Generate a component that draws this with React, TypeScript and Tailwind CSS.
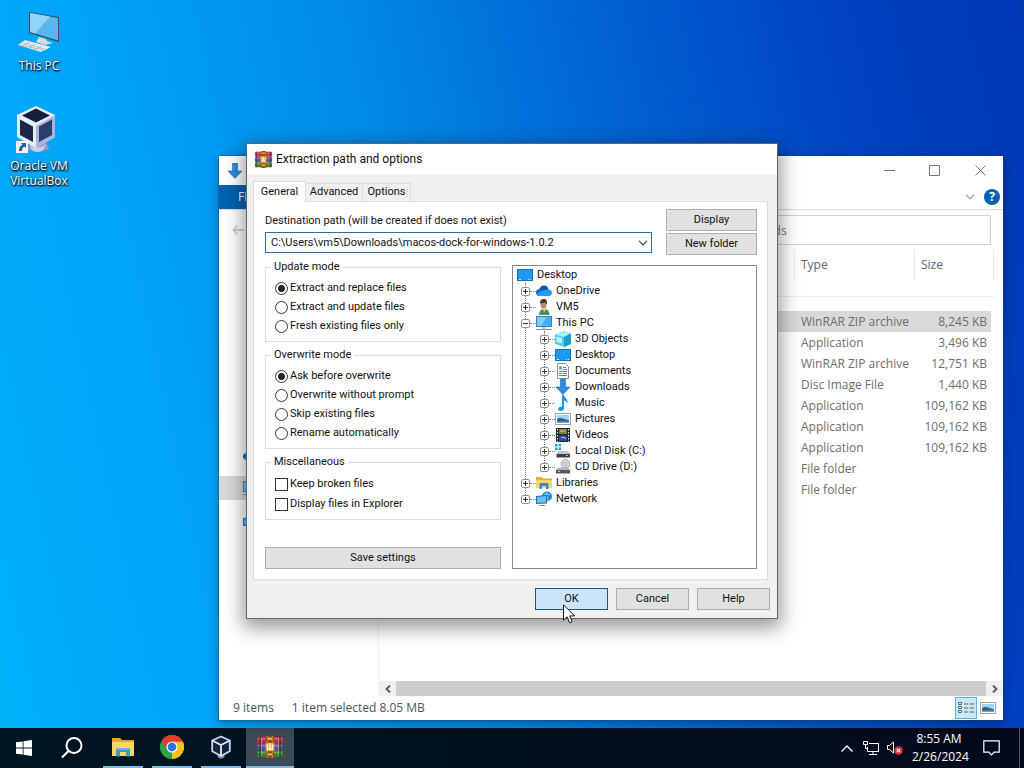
import { useState, type ReactNode } from 'react';

interface FileRow {
    type: string;
    size: string;
}

interface TreeNode {
    label: string;
    icon: ReactNode;
    open?: boolean;
    children?: TreeNode[];
}

const files: FileRow[] = [
    { type: 'WinRAR ZIP archive', size: '8,245 KB' },
    { type: 'Application', size: '3,496 KB' },
    { type: 'WinRAR ZIP archive', size: '12,751 KB' },
    { type: 'Disc Image File', size: '1,440 KB' },
    { type: 'Application', size: '109,162 KB' },
    { type: 'Application', size: '109,162 KB' },
    { type: 'Application', size: '109,162 KB' },
    { type: 'File folder', size: '' },
    { type: 'File folder', size: '' },
];

/* ---------- icons ---------- */

const WinRarIcon = ({ className }: { className: string }) => (
    <svg viewBox="0 0 26 24" preserveAspectRatio="none" className={className} aria-hidden="true">
        <rect x="0" y="1" width="26" height="7" rx="1" fill="#c22f45" />
        <rect x="1" y="2" width="24" height="2" fill="#e0566a" />
        <rect x="0" y="8.500" width="26" height="7" rx="1" fill="#4f4ba6" />
        <rect x="1" y="9.500" width="24" height="2" fill="#7d79cc" />
        <rect x="0" y="16" width="26" height="7" rx="1" fill="#2f7f35" />
        <rect x="1" y="17" width="24" height="2" fill="#5cb14a" />
        <path d="M3 1v22M23 1v22" stroke="#2d1b2c" strokeWidth="1" />
        <path d="M4.500 2v20M21.500 2v20" stroke="#c9a24a" strokeWidth="0.800" />
        <rect x="9" y="0" width="8" height="24" fill="#8d4a23" />
        <path d="M10.500 0v24M15.500 0v24" stroke="#c77a33" strokeWidth="1.200" />
        <rect x="8.500" y="7.500" width="9" height="9" fill="#e5a52f" />
        <path d="M10.500 9v5.500h5V9M13 8v6" fill="none" stroke="#fff3c8" strokeWidth="1.500" />
        <path d="M11 3h4M11 20h4" stroke="#f3c65a" strokeWidth="2" />
    </svg>
);

const VirtualBoxIcon = ({ className }: { className: string }) => (
    <svg viewBox="0 0 40 48" className={className} aria-hidden="true">
        <ellipse cx="22" cy="42" rx="11" ry="5" fill="#8b9bc4" />
        <path d="M14 38c2 6 14 6 17-1l-3 7c-3 4-10 4-13 0z" fill="#c4cce4" />
        <path d="M20 1 39 10v22L20 43 1 32V10z" fill="#e9edf7" />
        <path d="M20 21v22l19-11V10z" fill="#a9b4d6" />
        <path d="M20 3.500 34 10.500 20 17.500 6 10.500z" fill="#141f3d" />
        <path d="M4 14.500 17 21.500V37L4 30z" fill="#18264a" />
        <path d="M36 14.500 23 21.500V37l13-7z" fill="#2b3d6e" />
    </svg>
);

const VirtualBoxSmallIcon = () => (
    <svg viewBox="0 0 20 24" className="h-6 w-5" aria-hidden="true">
        <path d="M5.500 17h9l-1.500 5.500c-1.500 1.500-4.500 1.500-6 0z" fill="#8390b8" />
        <path d="M10 1.500 18.800 5.500v10.700L10 21 1.200 16.200V5.500z" fill="#15233f" stroke="#cdd6ea" strokeWidth="1.800" strokeLinejoin="round" />
        <path d="M1.200 5.500 10 10l8.800-4.500M10 10v11" fill="none" stroke="#e6ebf6" strokeWidth="1.800" />
    </svg>
);

const WinLogo = () => (
    <svg viewBox="0 0 16 16" className="size-4" fill="#fff" aria-hidden="true">
        <path d="M0 2.300 6.700 1.400v6.200H0zM7.500 1.300 16 0v7.600H7.500zM0 8.400h6.700v6.200L0 13.700zM7.500 8.400H16V16l-8.500-1.300z" />
    </svg>
);

const FolderIcon = ({ className }: { className: string }) => (
    <svg viewBox="0 0 22 20" className={className} aria-hidden="true">
        <path d="M0 1h8l2 2h12v16H0z" fill="#e3a92c" />
        <path d="M0 5h22v14H0z" fill="#fbd766" />
        <path d="M4 11h14v8.500h-4V15H8v4.500H4z" fill="#3f97cf" />
        <path d="M4 11h14v2H4z" fill="#66b4e2" />
    </svg>
);

const ChromeIcon = () => (
    <svg viewBox="0 0 24 24" className="size-6" aria-hidden="true">
        <path d="M12 12 1.600 6A12 12 0 0 1 22.400 6z" fill="#e33b2e" />
        <path d="M12 12 22.400 6A12 12 0 0 1 12 24z" fill="#fbc116" />
        <path d="M12 12 12 24A12 12 0 0 1 1.600 6z" fill="#2ba24c" />
        <path d="M12 6.500h10.700a12 12 0 0 1-.2 11L12 24l5-9z" fill="#fbc116" />
        <path d="M1.600 6A12 12 0 0 1 22.700 6.500H12l-5 8.200z" fill="#e33b2e" />
        <circle cx="12" cy="12" r="5.600" fill="#fff" />
        <circle cx="12" cy="12" r="4.400" fill="#2f72e2" />
    </svg>
);

const ScreenIcon = () => (
    <svg viewBox="0 0 16 16" className="size-4" aria-hidden="true">
        <rect x="0" y="2" width="16" height="12" fill="#0f6fc0" />
        <rect x="1" y="3" width="14" height="10" fill="#1a9cf5" />
        <path d="M2 12.500h2M11 12.500h1M13 12.500h1" stroke="#d9f0ff" />
    </svg>
);

const CloudIcon = () => (
    <svg viewBox="0 0 16 16" className="size-4" aria-hidden="true">
        <path d="M3 7.500C3.500 4 5.500 2.500 8 2.500c2.200 0 4 1.500 4.500 4L8 10z" fill="#0a56a8" />
        <path d="M3.500 13A3.500 3.500 0 0 1 3.300 6C6.500 5.800 9.500 9 13 13z" fill="#0f6cc9" />
        <path d="M12 6.500c2.500-.3 4 1.300 4 3.300S14.500 13 13 13H3.500c-1.300 0-2.200-.5-2.800-1.500C4 8 8.500 6.500 12 6.500z" fill="#2a97ea" />
    </svg>
);

const UserIcon = () => (
    <svg viewBox="0 0 16 16" className="size-4" aria-hidden="true">
        <path d="M3 16c0-4 2-6 5-6 3.500 0 5.500 2 5.500 6z" fill="#4a8f5c" />
        <path d="M6 9h4l-1.500 4z" fill="#e6dccb" />
        <ellipse cx="7.500" cy="5.500" rx="3" ry="4" fill="#b98d63" />
        <path d="M4 4.500C4 1 6 0 8 0s3.500 1.500 3 5.500L9.500 3.500z" fill="#43382c" />
    </svg>
);

const MonitorIcon = () => (
    <svg viewBox="0 0 16 16" className="size-4" aria-hidden="true">
        <rect x="0" y="1" width="16" height="11" fill="#3f7fb8" />
        <rect x="1" y="2" width="14" height="9" fill="#42adf7" />
        <path d="M1 2h10L5 11H1z" fill="#7fcbfb" />
        <path d="M0 14.500h16" stroke="#8b8f93" />
        <path d="M6 12h4v2H6z" fill="#c8ccd0" />
    </svg>
);

const CubeIcon = () => (
    <svg viewBox="0 0 16 16" className="size-4" aria-hidden="true">
        <path d="M0 3.500 9 0l7 2.500V13l-7 3-9-3z" fill="#4fcfe2" />
        <path d="M0 3.500 9 0l7 2.500L9 6z" fill="#a9eff6" />
        <path d="M9 6l7-3.500V13l-7 3z" fill="#16a0c4" />
        <path d="M1.500 5.500 7 7.300v5L1.500 11z" fill="#b9f3f8" />
    </svg>
);

const DocIcon = () => (
    <svg viewBox="0 0 16 16" className="size-4" aria-hidden="true">
        <path d="M2.500.5h8l3 3v12h-11z" fill="#fff" stroke="#8a9299" />
        <path d="M8 4.500h3M8 6.500h4M4 8.500h8M4 10.500h3M8 10.500h4M4 12.500h8" stroke="#3f8fd0" />
        <path d="M4 3.500h3v3H4z" fill="#57a6e0" />
    </svg>
);

const DownArrowIcon = () => (
    <svg viewBox="0 0 16 16" className="size-4" aria-hidden="true">
        <path d="M5.500 0h5v8H15l-7 7.500L1 8h4.500z" fill="#2f8ae0" stroke="#2369b8" strokeWidth="0.600" />
    </svg>
);

const MusicIcon = () => (
    <svg viewBox="0 0 16 16" className="size-4" aria-hidden="true">
        <path d="M7 0h2c.3 3 4.500 4 3.500 9-.3-2-1.500-3-3.500-3.500V13c0 1.800-1.500 3-3.200 3S3 15.200 3.200 13.800 5 11.500 7 12z" fill="#1c97e8" />
    </svg>
);

const PictureIcon = () => (
    <svg viewBox="0 0 16 16" className="size-4" aria-hidden="true">
        <rect x="0.500" y="2.500" width="15" height="11" fill="#fff" stroke="#9aa2a9" />
        <rect x="2" y="4" width="12" height="8" fill="#9fd4f5" />
        <path d="M2 8.500c3-3 5-1 12 1V12H2z" fill="#2b5f84" />
        <path d="M2 10.500h12V12H2z" fill="#6fa3c4" />
    </svg>
);

const VideoIcon = () => (
    <svg viewBox="0 0 16 16" className="size-4" aria-hidden="true">
        <rect x="1" y="1" width="14" height="14" fill="#25272b" />
        <path d="M2.500 2v13M13.500 2v13" stroke="#e6e6e6" strokeDasharray="1.500 1.500" />
        <rect x="4" y="2" width="8" height="5" fill="#7b7d4a" />
        <rect x="4" y="8.500" width="8" height="5.500" fill="#2b49a8" />
        <path d="M5 4h5M6 11l3-1 2 2" stroke="#d5d9a0" fill="none" />
    </svg>
);

const DiskIcon = () => (
    <svg viewBox="0 0 16 16" className="size-4" aria-hidden="true">
        <path d="M0 1h2.500v2.500H0zM3.500 1H6v2.500H3.500zM0 4.500h2.500V7H0zM3.500 4.500H6V7H3.500z" fill="#22a7ea" />
        <path d="M4 8h9l3 3H1z" fill="#c3c7ca" />
        <path d="M1.500 11H15v3.500H1.500z" fill="#3c4043" />
        <path d="M11 12.500h2" stroke="#8cf08c" />
    </svg>
);

const CdIcon = () => (
    <svg viewBox="0 0 16 16" className="size-4" aria-hidden="true">
        <circle cx="10.500" cy="4.800" r="4.300" fill="#d9dcdf" stroke="#8e9397" strokeWidth="0.800" />
        <circle cx="10.500" cy="4.800" r="1.400" fill="#fff" stroke="#8e9397" strokeWidth="0.800" />
        <path d="M3 8.500h10l2 2.500H1z" fill="#b4b8bb" />
        <path d="M1 11h14v3.500H1z" fill="#55595c" />
        <path d="M3 12.500h2" stroke="#d0d0d0" />
    </svg>
);

const LibraryIcon = () => (
    <svg viewBox="0 0 16 16" className="size-4" aria-hidden="true">
        <path d="M0 2h6l1 1.500h9V13H0z" fill="#e5ae37" />
        <path d="M0 5h16v8H0z" fill="#f8d469" />
        <path d="M3.500 8h9v6H10v-3H6v3H3.500z" fill="#3c86bd" />
    </svg>
);

const NetworkIcon = () => (
    <svg viewBox="0 0 16 16" className="size-4" aria-hidden="true">
        <circle cx="11" cy="5.500" r="5" fill="#2787cf" />
        <path d="M8 3c2 1 4-1 6 1M11 1c-2 4 2 5 1 9" stroke="#8fd0f5" fill="none" />
        <path d="M0 5l11-1v8.500L0 13z" fill="#2c6d9f" />
        <path d="M1 6l9-1v6.500L1 12z" fill="#5fc0f7" />
        <path d="M3 14.500h6" stroke="#8b8f93" />
    </svg>
);

const tree: TreeNode[] = [
    { label: 'OneDrive', icon: <CloudIcon /> },
    { label: 'VM5', icon: <UserIcon /> },
    {
        label: 'This PC',
        icon: <MonitorIcon />,
        open: true,
        children: [
            { label: '3D Objects', icon: <CubeIcon /> },
            { label: 'Desktop', icon: <ScreenIcon /> },
            { label: 'Documents', icon: <DocIcon /> },
            { label: 'Downloads', icon: <DownArrowIcon /> },
            { label: 'Music', icon: <MusicIcon /> },
            { label: 'Pictures', icon: <PictureIcon /> },
            { label: 'Videos', icon: <VideoIcon /> },
            { label: 'Local Disk (C:)', icon: <DiskIcon /> },
            { label: 'CD Drive (D:)', icon: <CdIcon /> },
        ],
    },
    { label: 'Libraries', icon: <LibraryIcon /> },
    { label: 'Network', icon: <NetworkIcon /> },
];

/* ---------- dialog parts ---------- */

function TreeList({ nodes, className }: { nodes: TreeNode[]; className: string }) {
    return (
        <ul className={`relative before:absolute before:top-0 before:bottom-2 before:left-1 before:border-l before:border-dotted before:border-[#808080] ${className}`}>
            {nodes.map((node) => (
                <li key={node.label}>
                    <div className="flex h-4 items-center">
                        <button
                            aria-label={`Toggle ${node.label}`}
                            className="relative size-[9px] shrink-0 rounded-xs border border-[#919191] bg-white"
                        >
                            <svg viewBox="0 0 7 7" className="size-[7px]" stroke="#333" aria-hidden="true">
                                <path d={node.open ? 'M1 3.500h5' : 'M1 3.500h5M3.500 1v5'} />
                            </svg>
                        </button>
                        <span className="w-[6px] border-t border-dotted border-[#808080]" />
                        {node.icon}
                        <span className="ml-1 whitespace-nowrap">{node.label}</span>
                    </div>
                    {node.children && <TreeList nodes={node.children} className="ml-[19px]" />}
                </li>
            ))}
        </ul>
    );
}

function Group({ title, children }: { title: string; children: ReactNode }) {
    return (
        <fieldset className="border border-[#dcdcdc] px-[9px] pt-1 pb-[5px]">
            <legend className="-ml-1 h-4 px-[3px] leading-4">{title}</legend>
            {children}
        </fieldset>
    );
}

interface RadioGroupProps {
    name: string;
    options: string[];
}

function RadioGroup({ name, options }: RadioGroupProps) {
    const [value, setValue] = useState(options[0]);

    return (
        <>
            {options.map((option) => (
                <label key={option} className="flex h-[19px] items-center gap-[2px]">
                    <input
                        type="radio"
                        name={name}
                        checked={value === option}
                        onChange={() => setValue(option)}
                        className="size-[13px] appearance-none rounded-full border border-[#333] bg-white checked:bg-[radial-gradient(circle,#222_3px,transparent_4px)]"
                    />
                    {option}
                </label>
            ))}
        </>
    );
}

function CheckItem({ label }: { label: string }) {
    return (
        <label className="flex h-5 items-center gap-[2px]">
            <input type="checkbox" className="size-[13px] appearance-none border border-[#333] bg-white checked:bg-[#333]" />
            {label}
        </label>
    );
}

const buttonClass = 'h-[22px] border border-[#adadad] bg-[#e1e1e1] text-center';

function ExtractDialog() {
    const [path, setPath] = useState('C:\\Users\\vm5\\Downloads\\macos-dock-for-windows-1.0.2');

    return (
        <section
            aria-label="Extraction path and options"
            className="absolute top-36 left-[247px] w-[530px] bg-[#f0f0f0] font-[Roboto,sans-serif] text-[11px] text-[#111] shadow-[0_0_0_1px_#5c6670,0_6px_18px_4px_rgba(0,0,0,0.4)]"
        >
            <header className="flex h-[30px] items-center gap-1 bg-white px-2">
                <WinRarIcon className="size-[17px]" />
                <h1 className="text-xs">Extraction path and options</h1>
            </header>

            <div className="pt-[7px] pr-[9px] pl-[6px]">
                <div role="tablist" className="flex items-end">
                    <button role="tab" aria-selected="true" className="relative -mb-px h-[21px] w-[53px] border border-b-0 border-[#dcdcdc] bg-white">
                        General
                    </button>
                    <button role="tab" aria-selected="false" className="h-[18px] w-[57px] border border-b-0 border-l-0 border-[#dcdcdc]">
                        Advanced
                    </button>
                    <button role="tab" aria-selected="false" className="h-[18px] w-[48px] border border-b-0 border-l-0 border-[#dcdcdc]">
                        Options
                    </button>
                </div>

                <div className="border border-[#dcdcdc] bg-white pt-[7px] pr-[10px] pb-[10px] pl-[11px]">
                    <div className="flex gap-[14px]">
                        <div className="flex-1">
                            <label htmlFor="dest" className="block h-[23px] leading-6">
                                Destination path (will be created if does not exist)
                            </label>
                            <div className="flex h-[21px] items-center border border-[#2a6fa8]">
                                <input
                                    id="dest"
                                    value={path}
                                    onChange={(e) => setPath(e.target.value)}
                                    className="h-full min-w-0 flex-1 pl-[5px] outline-none"
                                />
                                <button aria-label="Recent paths" className="flex w-4 justify-center">
                                    <svg viewBox="0 0 10 6" className="h-[6px] w-[10px]" fill="none" stroke="#444" strokeWidth="1.200" aria-hidden="true">
                                        <path d="M1 .8 5 4.800 9 .8" />
                                    </svg>
                                </button>
                            </div>
                        </div>
                        <div className="flex w-[91px] flex-col gap-[2px]">
                            <button className={buttonClass}>Display</button>
                            <button className={buttonClass}>New folder</button>
                        </div>
                    </div>

                    <div className="mt-1 flex gap-[11px]">
                        <div className="flex w-[236px] flex-col gap-[5px]">
                            <Group title="Update mode">
                                <RadioGroup
                                    name="update"
                                    options={['Extract and replace files', 'Extract and update files', 'Fresh existing files only']}
                                />
                            </Group>
                            <Group title="Overwrite mode">
                                <RadioGroup
                                    name="overwrite"
                                    options={['Ask before overwrite', 'Overwrite without prompt', 'Skip existing files', 'Rename automatically']}
                                />
                            </Group>
                            <Group title="Miscellaneous">
                                <CheckItem label="Keep broken files" />
                                <CheckItem label="Display files in Explorer" />
                            </Group>
                            <button className={`${buttonClass} mt-auto`}>Save settings</button>
                        </div>

                        <div className="mt-[6px] h-76 flex-1 border border-[#828790] bg-white pt-[1px]">
                            <div className="flex h-4 items-center gap-1 pl-1">
                                <ScreenIcon />
                                Desktop
                            </div>
                            <TreeList nodes={tree} className="ml-2" />
                        </div>
                    </div>
                </div>
            </div>

            <footer className="flex justify-end gap-2 pt-2 pr-[7px] pb-2">
                <button className="h-[22px] w-[73px] border border-[#15568f] bg-[#cce4f7]">OK</button>
                <button className={`${buttonClass} w-[73px]`}>Cancel</button>
                <button className={`${buttonClass} w-[73px]`}>Help</button>
            </footer>
        </section>
    );
}

/* ---------- explorer ---------- */

function ExplorerWindow() {
    return (
        <section
            aria-label="Downloads"
            className="absolute top-[156px] right-[21px] bottom-2 left-[219px] flex flex-col bg-white text-[#6d6d6d] shadow-[0_0_0_1px_rgba(40,70,100,0.35),0_3px_10px_rgba(0,0,0,0.35)]"
        >
            <header className="flex h-[29px] items-center justify-between pl-2">
                <DownArrowIcon />
                <div className="flex text-[#777]">
                    <button aria-label="Minimize" className="flex w-[45px] justify-center">
                        <svg viewBox="0 0 11 11" className="size-[11px]" fill="none" stroke="currentColor" aria-hidden="true">
                            <path d="M0 5.500h11" />
                        </svg>
                    </button>
                    <button aria-label="Maximize" className="flex w-[45px] justify-center">
                        <svg viewBox="0 0 11 11" className="size-[11px]" fill="none" stroke="currentColor" aria-hidden="true">
                            <path d="M.5.5h10v10H.5z" />
                        </svg>
                    </button>
                    <button aria-label="Close" className="flex w-[46px] justify-center">
                        <svg viewBox="0 0 11 11" className="size-[11px]" fill="none" stroke="currentColor" aria-hidden="true">
                            <path d="m.5.5 10 10M10.500.5l-10 10" />
                        </svg>
                    </button>
                </div>
            </header>

            <div className="flex h-[25px] items-center justify-between border-b border-[#dadbdc] pr-[3px]">
                <button className="h-full bg-[#0063b1] px-[19px] text-white">File</button>
                <div className="flex items-center gap-[9px]">
                    <button aria-label="Expand the ribbon">
                        <svg viewBox="0 0 10 6" className="h-[6px] w-[10px]" fill="none" stroke="#aaa" strokeWidth="1.500" aria-hidden="true">
                            <path d="M1 .8 5 4.800 9 .8" />
                        </svg>
                    </button>
                    <button aria-label="Help" className="size-4 rounded-full bg-[#0063b1] text-center text-xs leading-4 font-bold text-white">
                        ?
                    </button>
                </div>
            </div>

            <div className="flex h-10 items-center justify-between pr-3 pl-[13px]">
                <button aria-label="Back">
                    <svg viewBox="0 0 12 10" className="h-[10px] w-3" fill="none" stroke="#c4c4c4" strokeWidth="1.300" aria-hidden="true">
                        <path d="M12 5H1M5.500.8 1.200 5l4.300 4.200" />
                    </svg>
                </button>
                <input
                    aria-label="Search"
                    placeholder="Search Downloads"
                    className="h-[30px] w-[320px] border border-[#d0d0d0] pl-[11px] outline-none placeholder:text-[#777]"
                />
            </div>

            <div className="flex min-h-0 flex-1">
                <nav className="w-[160px] shrink-0 border-r border-[#f3f3f3] pt-[193px] *:flex *:h-6 *:items-center *:pl-6">
                    <a href="#onedrive" aria-label="OneDrive">
                        <CloudIcon />
                    </a>
                    <a href="#pc" aria-label="This PC" className="my-[9px] bg-[#d9d9d9]">
                        <MonitorIcon />
                    </a>
                    <a href="#network" aria-label="Network">
                        <NetworkIcon />
                    </a>
                </nav>

                <div className="flex min-w-0 flex-1 flex-col justify-between">
                    <table className="mr-[9px] table-fixed border-separate border-spacing-0 text-left">
                        <colgroup>
                            <col />
                            <col className="w-[120px]" />
                            <col className="w-20" />
                        </colgroup>
                        <thead>
                            <tr className="h-[30px] text-[#56677c]">
                                <td />
                                <th className="border-l border-[#e8e8e8] pl-[6px] font-normal">Type</th>
                                <th className="border-x border-[#e8e8e8] pl-[6px] font-normal">Size</th>
                            </tr>
                            <tr className="h-[17px]">
                                <td colSpan={3} className="border-b border-[#ebebeb]" />
                            </tr>
                            <tr className="h-[14px]">
                                <td colSpan={3} />
                            </tr>
                        </thead>
                        <tbody>
                            {files.map((file, index) => (
                                <tr key={index} className={index === 0 ? 'h-[21px] bg-[#d9d9d9]' : 'h-[21px]'}>
                                    <td />
                                    <td className="pl-[7px] whitespace-nowrap">{file.type}</td>
                                    <td className="border-r-3 border-white pr-1 text-right whitespace-nowrap">{file.size}</td>
                                </tr>
                            ))}
                        </tbody>
                    </table>

                    <div className="flex h-[15px] items-center bg-[#f0f0f0] text-[#555]">
                        <button aria-label="Scroll left" className="flex w-[17px] justify-center">
                            <svg viewBox="0 0 6 8" className="h-2 w-[6px]" fill="none" stroke="currentColor" strokeWidth="1.800" aria-hidden="true">
                                <path d="M5 .5 1.500 4 5 7.500" />
                            </svg>
                        </button>
                        <div className="h-full flex-1 bg-[#cdcdcd]" />
                        <button aria-label="Scroll right" className="flex w-[17px] justify-center">
                            <svg viewBox="0 0 6 8" className="h-2 w-[6px]" fill="none" stroke="currentColor" strokeWidth="1.800" aria-hidden="true">
                                <path d="M1 .5 4.500 4 1 7.500" />
                            </svg>
                        </button>
                    </div>
                </div>
            </div>

            <footer className="flex h-6 items-center pr-[7px] pl-[14px] text-[#4a5560]">
                <span>9 items</span>
                <span className="ml-[18px]">1 item selected</span>
                <span className="ml-[3px]">8.05 MB</span>
                <button aria-label="Details view" className="ml-auto flex h-[22px] w-[22px] items-center justify-center border border-[#5eb3e0] bg-[#cbe8f6]">
                    <svg viewBox="0 0 16 12" className="h-3 w-4" fill="none" stroke="#56646e" aria-hidden="true">
                        <path d="M.5.5h3v2h-3zM.5 4.500h3v2h-3zM.5 8.500h3v2h-3z" fill="#fff" />
                        <path d="M6 2h4M11.500 2H16M6 6h4M11.500 6H16M6 10h4M11.500 10H16" />
                    </svg>
                </button>
                <button aria-label="Large icons view" className="ml-[3px]">
                    <PictureIcon />
                </button>
            </footer>
        </section>
    );
}

/* ---------- desktop + taskbar ---------- */

function DesktopIcons() {
    const label = 'text-center leading-[15px] text-white [text-shadow:0_1px_2px_#000,1px_1px_2px_#000]';

    return (
        <div className="flex w-[78px] flex-col items-center pt-[11px]">
            <button className="flex flex-col items-center">
                <svg viewBox="0 0 44 42" className="h-[42px] w-11" aria-hidden="true">
                    <path d="M12 1 42 6v25L12 22z" fill="#39495a" />
                    <path d="M13 2 41 7v22.500L13 21z" fill="#59b6f0" />
                    <path d="M13 2 33 5.600 18 22.500 13 21z" fill="#93d3f8" />
                    <path d="m22 26 7 2 1 2 6 2-8 2-9-3z" fill="#d3d9dd" />
                    <path d="M8 29 34 36l-10 5L1 34z" fill="#e8ebed" />
                    <path d="m6 32 22 6M4 34l22 5M12 31l-6 4M18 33l-6 4M24 35l-6 4" stroke="#a9b2b8" strokeWidth="0.800" />
                </svg>
                <span className={`mt-[5px] ${label}`}>This PC</span>
            </button>
            <button className="mt-8 flex flex-col items-center">
                <span className="relative mr-[6px]">
                    <VirtualBoxIcon className="h-12 w-10" />
                    <svg viewBox="0 0 12 12" className="absolute bottom-0 left-0 size-3" aria-hidden="true">
                        <path d="M0 0h12v12H0z" fill="#f4f6f8" />
                        <path d="M5 2h5v5L8.300 5.400C6.500 6.500 6 8 6 10H3c0-3 1-5 3.500-6.400z" fill="#2660b0" />
                    </svg>
                </span>
                <span className={`mt-[5px] ${label}`}>
                    Oracle VM
                    <br />
                    VirtualBox
                </span>
            </button>
        </div>
    );
}

function TaskButton({ label, active, children }: { label: string; active?: boolean; children: ReactNode }) {
    return (
        <button
            aria-label={label}
            className={`flex h-full w-12 flex-col items-center justify-end ${active ? 'bg-[#3b4a53]' : ''}`}
        >
            <span className="flex flex-1 items-center">{children}</span>
            <span className={`h-[2px] bg-[#7cb8ea] ${active ? 'w-full' : 'w-10'}`} />
        </button>
    );
}

function Taskbar() {
    return (
        <footer className="flex h-10 shrink-0 items-center bg-linear-to-r from-[#001622] to-[#020a1c] text-white">
            <button aria-label="Start" className="flex w-12 justify-center">
                <WinLogo />
            </button>
            <button aria-label="Search" className="flex w-12 justify-center">
                <svg viewBox="0 0 22 22" className="size-[22px]" fill="none" stroke="#fff" strokeWidth="2" aria-hidden="true">
                    <circle cx="13" cy="8.500" r="7.500" />
                    <path d="M7.700 13.800 1 20.500" />
                </svg>
            </button>
            <div className="ml-[3px] flex h-full gap-px">
                <TaskButton label="File Explorer">
                    <FolderIcon className="h-5 w-[22px]" />
                </TaskButton>
                <TaskButton label="Chrome">
                    <ChromeIcon />
                </TaskButton>
                <TaskButton label="VirtualBox">
                    <VirtualBoxSmallIcon />
                </TaskButton>
                <TaskButton label="WinRAR" active>
                    <WinRarIcon className="h-[22px] w-[26px]" />
                </TaskButton>
            </div>

            <div className="ml-auto flex h-full items-center">
                <button aria-label="Show hidden icons">
                    <svg viewBox="0 0 12 7" className="h-[7px] w-3" fill="none" stroke="#fff" strokeWidth="1.400" aria-hidden="true">
                        <path d="M.5 6.500 6 1l5.500 5.500" />
                    </svg>
                </button>
                <button aria-label="Network" className="ml-[10px]">
                    <svg viewBox="0 0 16 14" className="h-[14px] w-4" fill="none" stroke="#fff" aria-hidden="true">
                        <path d="M6 2.500h9.500v8H4.500V6M.5.5h4v3h-4zM2.500 3.500v4h2M10 10.500v3M6 13.500h8" />
                    </svg>
                </button>
                <button aria-label="Volume muted" className="ml-2">
                    <svg viewBox="0 0 16 14" className="h-[14px] w-4" fill="none" stroke="#fff" aria-hidden="true">
                        <path d="M.5 4.500h2L6.500 1v11l-4-3.500h-2z" />
                        <circle cx="11.500" cy="9.500" r="4.300" fill="#d8323a" stroke="none" />
                        <path d="m9.800 7.800 3.400 3.400M13.200 7.800l-3.400 3.400" strokeWidth="1.200" />
                    </svg>
                </button>
                <div className="ml-[9px] w-[54px] text-center leading-[18px] whitespace-nowrap">
                    <p>8:55 AM</p>
                    <p>2/26/2024</p>
                </div>
                <button aria-label="Notifications" className="ml-[17px]">
                    <svg viewBox="0 0 17 16" className="h-4 w-[17px]" fill="none" stroke="#fff" strokeWidth="1.200" aria-hidden="true">
                        <path d="M.8.8h15.400v11.400h-5L8.500 15l-2.700-2.800h-5z" />
                    </svg>
                </button>
                <span className="ml-[19px] h-full w-[5px] border-l border-[#4d5766]" />
            </div>
        </footer>
    );
}

export default function App() {
    return (
        <div className="flex h-screen flex-col overflow-hidden bg-[linear-gradient(78deg,#00b2fa_0%,#00a2f8_22%,#008ae6_43%,#0062d3_64%,#0042c0_84%,#0038b4_100%)] font-['Open_Sans',sans-serif] text-xs">
            <main className="relative flex-1">
                <DesktopIcons />
                <ExplorerWindow />
                <ExtractDialog />
                {/* mouse pointer */}
                <svg viewBox="0 0 12 20" className="absolute top-[604px] left-[563px] h-5 w-3" aria-hidden="true">
                    <path d="M.5.8v15.400l3.600-3.400 2.500 6 2.600-1.100-2.500-5.800h4.900z" fill="#fff" stroke="#000" strokeWidth="0.900" />
                </svg>
            </main>
            <Taskbar />
        </div>
    );
}
